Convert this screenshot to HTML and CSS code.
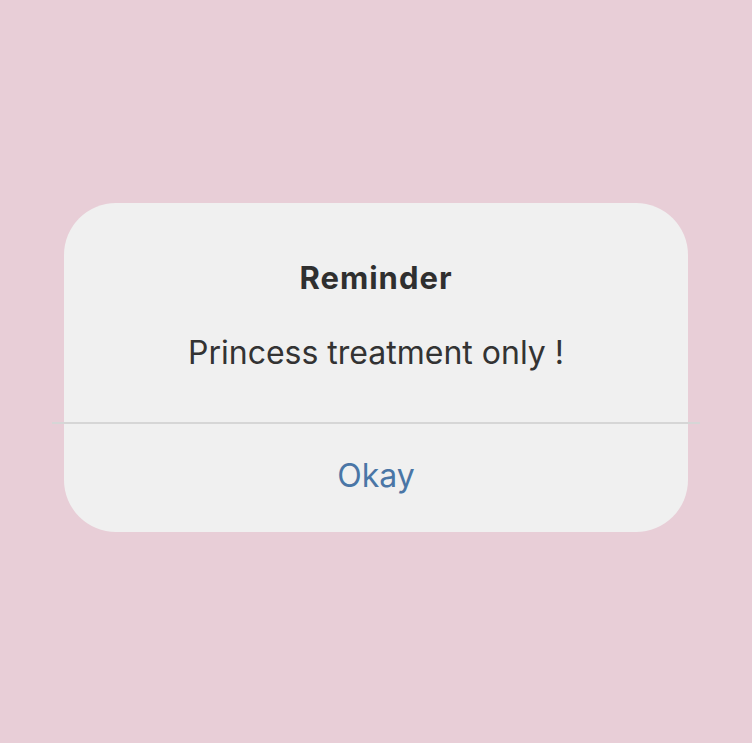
FILE: index.html
```html
<!DOCTYPE html>
<html>
<head>
<meta charset="utf-8">
<link rel="stylesheet" href="styles.css">
</head>
<body>
<div class="page">
  <div class="dialog">
    <div class="content">
      <div class="title">Reminder</div>
      <div class="message">Princess treatment only !</div>
    </div>
    <div class="divider"></div>
    <div class="actions">
      <div class="button">Okay</div>
    </div>
  </div>
</div>
</body>
</html>
```
FILE: styles.css
```css
html, body {
  margin: 0;
  padding: 0;
  background: #e8ced7;
}
.page {
  width: 752px;
  height: 743px;
  box-sizing: border-box;
  padding: 203px 64px 0 64px;
  font-family: "Inter", "Liberation Sans", sans-serif;
}
.dialog {
  width: 624px;
  height: 329px;
  background: #f0f0f0;
  border-radius: 52px;
  display: flex;
  flex-direction: column;
}
.content {
  height: 219px;
  display: flex;
  flex-direction: column;
  align-items: center;
  box-sizing: border-box;
  padding-top: 55px;
}
.title {
  font-size: 31px;
  font-weight: 700;
  letter-spacing: 1px;
  color: #2f2f2f;
  line-height: 40px;
}
.message {
  font-size: 32px;
  color: #333333;
  line-height: 40px;
  margin-top: 35px;
}
.divider {
  height: 2px;
  background: #d6d6d6;
  margin: 0 -12px 0 -12px;
}
.actions {
  flex: 1;
  display: flex;
  justify-content: center;
  padding-top: 32px;
}
.button {
  font-size: 32px;
  color: #4a76a6;
  line-height: 40px;
}
```
